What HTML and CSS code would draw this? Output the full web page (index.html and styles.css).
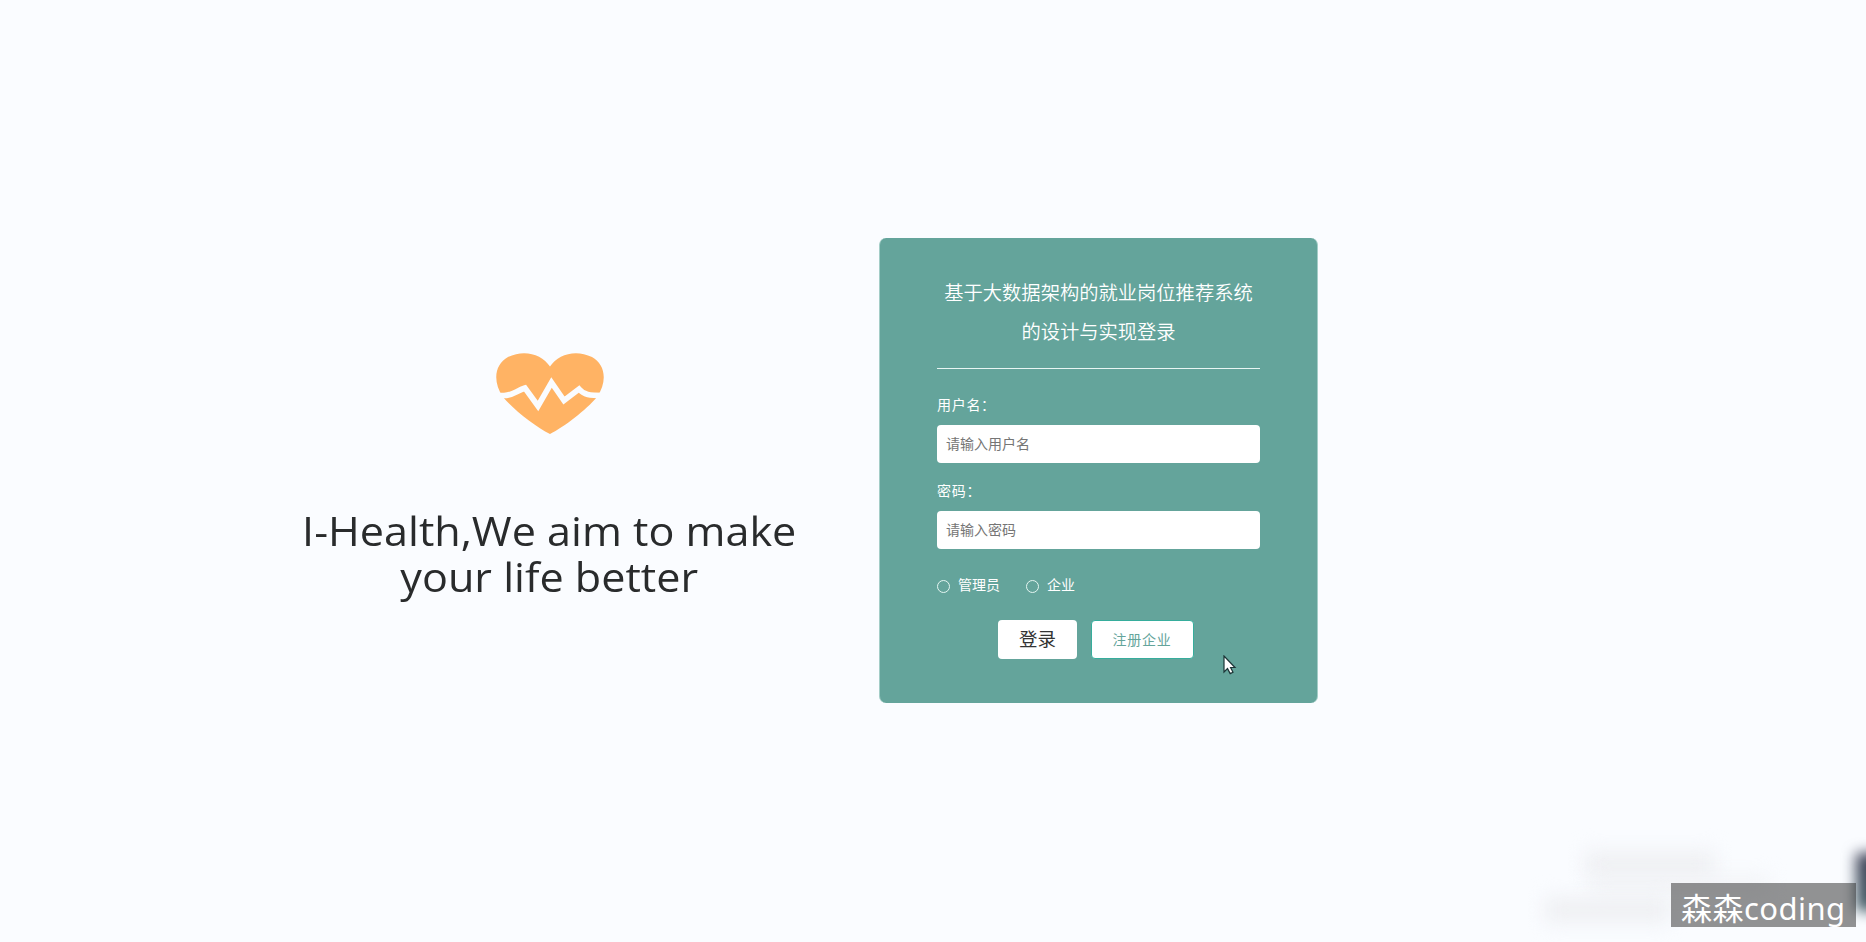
FILE: index.html
```html
<!DOCTYPE html>
<html lang="zh-CN">
<head>
<meta charset="utf-8">
<title>登录</title>
<link rel="stylesheet" href="styles.css">
</head>
<body>
<main class="page">
  <section class="intro">
    <svg class="heart" viewBox="0 0 108 82" width="108" height="82">
      <path fill="#ffb364" d="M54 81C40 74 18 57 7 44C-4 28-1 11 12 4C28-4 46 1 54 13.500C62 1 80-4 96 4C109 11 112 28 101 44C90 57 68 74 54 81Z"/>
      <path fill="none" stroke="#fafcff" stroke-width="5.600" d="M0 42.500H8C17 42.500 20 38 29 35L42 53L55.500 29.500L68 47.500L83 36C88 42 93 42.500 108 42.500"/>
    </svg>
    <h1 class="slogan">I-Health,We aim to make<br>your life better</h1>
  </section>
  <form class="card">
    <h2 class="title">基于大数据架构的就业岗位推荐系统<br>的设计与实现登录</h2>
    <label class="label" for="user">用户名：</label>
    <input class="input" id="user" type="text" placeholder="请输入用户名">
    <label class="label" for="pass">密码：</label>
    <input class="input" id="pass" type="password" placeholder="请输入密码">
    <div class="roles">
      <label class="role"><input class="radio" type="radio" name="role">管理员</label>
      <label class="role"><input class="radio" type="radio" name="role">企业</label>
    </div>
    <div class="actions">
      <button class="login" type="button">登录</button>
      <button class="register" type="button">注册企业</button>
    </div>
  </form>
</main>
<svg class="cursor" viewBox="0 0 14 20" width="14" height="20"><path fill="#fff" stroke="#1c3436" stroke-width="1.200" d="M1 1V17L4.500 13.600L7.200 18.600L10 17.200L7.600 12.500H12Z"/></svg>
<div class="haze haze-a"></div>
<div class="haze haze-b"></div>
<div class="haze haze-c"></div>
<div class="edge"><div class="edge-shade"></div></div>
<div class="mark">森森coding</div>
</body>
</html>
```
FILE: styles.css
```css
* { box-sizing: border-box; }
body {
  margin: 0;
  height: 942px;
  overflow: hidden;
  position: relative;
  background: #fafcff;
  font-family: "Noto Sans", "Noto Sans CJK SC", sans-serif;
}
.page { display: flex; align-items: flex-start; padding: 238px 0 0 279px; }
.intro { width: 541px; margin-right: 59px; padding-top: 115px; display: flex; flex-direction: column; align-items: center; }
.heart { display: block; }
.slogan {
  margin: 73px 0 0;
  font: 400 40px/46px "Open Sans", "Noto Sans", sans-serif;
  color: #292b2c;
  text-align: center;
  transform: scaleX(1.078);
  white-space: nowrap;
}
.card {
  width: 439px;
  height: 465px;
  margin: 0;
  padding: 35px 57px 0 57px;
  border: 1px solid #a3cdc7;
  border-width: 0 1px;
  border-radius: 7px;
  background: #64a49b;
  color: #fff;
  font-family: "Noto Sans CJK SC", sans-serif;
}
.title { margin: 0 0 26px; height: 96px; border-bottom: 1px solid #e8f5f3; text-align: center; font-size: 19.3px; line-height: 39px; font-weight: 350; white-space: nowrap; }
.label { display: block; height: 30px; line-height: 19px; font-size: 14px; letter-spacing: .7px; font-weight: 400; }
.input { display: block; width: 323px; height: 38px; margin: 0 0 18px; padding: 0 9px 2px; border: 0; border-radius: 4px; background: #fff; font: 14px "Noto Sans CJK SC", sans-serif; }
.input::placeholder { color: #757575; opacity: 1; }
.roles { display: flex; gap: 26px; padding-top: 6px; height: 53px; }
.role { display: flex; height: 22px; line-height: 22px; font-size: 14px; font-weight: 400; }
.radio { appearance: none; width: 13px; height: 13px; margin: 7px 8px 0 0; border: 1px solid #e4f6f2; border-radius: 50%; }
.actions { display: flex; align-items: flex-start; padding-left: 61px; gap: 14px; }
.login { width: 79px; height: 39px; padding: 0 0 3px; border: 0; border-radius: 4px; background: #fff; color: #333; font: 18.5px "Noto Sans CJK SC", sans-serif; }
.register { width: 103px; height: 39px; padding: 0 1px 2px 0; border: 1px solid #36ad9c; border-radius: 4px; background: #fff; color: #64a49b; font: 14px "Noto Sans CJK SC", sans-serif; letter-spacing: .8px; }
.cursor { position: absolute; left: 1223px; top: 655px; }
.haze { position: absolute; background: #eeeff2; filter: blur(10px); }
.haze-a { left: 1585px; top: 852px; width: 130px; height: 24px; }
.haze-b { left: 1590px; top: 875px; width: 180px; height: 20px; opacity: .6; }
.haze-c { left: 1545px; top: 898px; width: 125px; height: 24px; }
.edge { position: absolute; right: 0; top: 820px; width: 36px; height: 122px; overflow: hidden; }
.edge-shade { width: 40px; height: 58px; margin: 33px 0 0 26px; background: linear-gradient(#3e4056, #466069); filter: blur(7px); }
.mark { position: absolute; left: 1671px; top: 883px; width: 185px; height: 44px; padding-left: 10px; background: rgba(40, 40, 40, .5); color: #fff; font: 400 31px/51px "Noto Sans", "Noto Sans CJK SC", sans-serif; letter-spacing: .45px; white-space: nowrap; }
```
